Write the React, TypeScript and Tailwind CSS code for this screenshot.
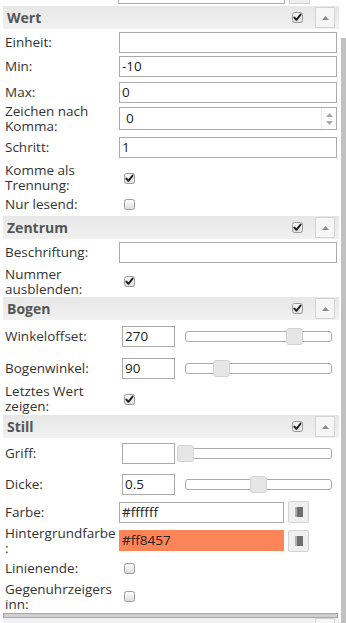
import React from "react";

const font = { fontFamily: '"Open Sans", "DejaVu Sans", sans-serif' };

function Check({ checked }: { checked?: boolean }) {
  return (
    <svg width="11" height="11" viewBox="0 0 11 11" className="block">
      <defs>
        <linearGradient id="cbg" x1="0" y1="0" x2="0" y2="1">
          <stop offset="0" stopColor="#ffffff" />
          <stop offset="1" stopColor="#dcdcdc" />
        </linearGradient>
      </defs>
      <rect x="0.5" y="0.5" width="10" height="10" rx="2" fill="url(#cbg)" stroke="#9a9a9a" />
      {checked && (
        <path d="M2.4 5.6 L4.4 7.8 L8.6 2.6" fill="none" stroke="#1f1f1f" strokeWidth="2" strokeLinecap="round" strokeLinejoin="round" />
      )}
    </svg>
  );
}

function Header({ title }: { title: string }) {
  return (
    <div className="flex shrink-0 items-center h-[23px] w-[336px] bg-gradient-to-b from-[#e7e7e7] to-[#f1f1f1] pl-[4px] pr-[4px]">
      <span className="flex-1 text-[14px] font-bold text-[#555]">{title}</span>
      <Check checked />
      <div className="ml-[12px] w-[20px] h-[21px] border border-[#d3d3d3] bg-[#f6f6f6] flex items-center justify-center">
        <svg width="7" height="4" viewBox="0 0 7 4">
          <path d="M0 4 L3.5 0 L7 4 Z" fill="#8a8a8a" />
        </svg>
      </div>
    </div>
  );
}

function Row({ label, h, children }: { label: React.ReactNode; h: string; children?: React.ReactNode }) {
  return (
    <div className={`flex shrink-0 items-center ${h}`}>
      <div className="w-[116px] pl-[2px] text-[13.5px] leading-[15px] text-[#333] shrink-0">{label}</div>
      {children}
    </div>
  );
}

function TextInput({ value, w = "w-[218px]", extra = "" }: { value?: string; w?: string; extra?: string }) {
  return (
    <div className={`${w} h-[21px] border border-[#aaa] bg-white text-[13.5px] leading-[19px] pl-[2px] text-[#222] ${extra}`}>
      {value}
    </div>
  );
}

function Slider({ frac }: { frac: number }) {
  return (
    <div className="relative ml-[10px] w-[147px] h-[11px] border border-[#aaa] rounded-[3px] bg-white">
      <div
        className="absolute top-[-4px] w-[17px] h-[17px] border border-[#d3d3d3] rounded-[3px] bg-[#e6e6e6]"
        style={{ left: `calc(${frac * 100}% - 9px)` }}
      />
    </div>
  );
}

function SliderRow({ label, value, frac, h }: { label: string; value: string; frac: number; h: string }) {
  return (
    <Row label={label} h={h}>
      <div className="ml-[3px] w-[53px] h-[21px] border border-[#aaa] bg-white text-[13.5px] leading-[19px] pl-[2px] text-[#222]">
        {value}
      </div>
      <Slider frac={frac} />
    </Row>
  );
}

function ColorButton() {
  return (
    <div className="ml-[4px] w-[21px] h-[22px] border border-[#d3d3d3] rounded-[2px] bg-[#f0f0f0] flex items-center justify-center">
      <svg width="8" height="10" viewBox="0 0 8 10">
        <rect x="2" y="0" width="6" height="10" fill="#6f6f6f" />
        <path d="M0 1 H2 M0 3 H2 M0 5 H2 M0 7 H2 M0 9 H2" stroke="#6f6f6f" strokeWidth="1" />
      </svg>
    </div>
  );
}

export default function App() {
  return (
    <div className="w-[346px] h-[623px] overflow-hidden bg-white flex" style={font}>
      <div className="w-[341px] pl-[3px] flex flex-col">
        {/* remains of the row above */}
        <div className="flex shrink-0 h-[6px] items-end">
          <div className="ml-[115px] w-[167px] h-[10px] border border-[#aaa] mb-[2px]" />
          <div className="ml-[4px] w-[21px] h-[10px] border border-[#d3d3d3] bg-[#f0f0f0] mb-[2px]" />
        </div>

        <div className="h-[24px] flex shrink-0">
          <Header title="Wert" />
        </div>
        <Row label="Einheit:" h="h-[24px]">
          <TextInput />
        </Row>
        <Row label="Min:" h="h-[25px]">
          <TextInput value="-10" />
        </Row>
        <Row label="Max:" h="h-[26px]">
          <TextInput value="0" />
        </Row>
        <Row label={<>Zeichen nach<br />Komma:</>} h="h-[27px]">
          <div className="relative w-[218px] h-[23px] border border-[#aaa] bg-white text-[13.5px] leading-[21px] pl-[6px] text-[#222]">
            0
            <div className="absolute right-0 top-0 bottom-0 w-[15px] flex flex-col items-center justify-center gap-[4px] border-l border-[#eee]">
              <svg width="7" height="4" viewBox="0 0 7 4"><path d="M0 4 L3.5 0 L7 4 Z" fill="#a8a8a8" /></svg>
              <svg width="7" height="4" viewBox="0 0 7 4"><path d="M0 0 L3.5 4 L7 0 Z" fill="#a8a8a8" /></svg>
            </div>
          </div>
        </Row>
        <Row label="Schritt:" h="h-[31px]">
          <TextInput value="1" />
        </Row>
        <Row label={<>Komme als<br />Trennung:</>} h="h-[30px]">
          <div className="ml-[5px]"><Check checked /></div>
        </Row>
        <Row label="Nur lesend:" h="h-[23px]">
          <div className="ml-[5px]"><Check /></div>
        </Row>

        <Header title="Zentrum" />
        <Row label="Beschriftung:" h="h-[27px]">
          <TextInput />
        </Row>
        <Row label={<>Nummer<br />ausblenden:</>} h="h-[31px]">
          <div className="ml-[5px]"><Check checked /></div>
        </Row>

        <Header title="Bogen" />
        <SliderRow label="Winkeloffset:" value="270" frac={0.75} h="h-[33px]" />
        <SliderRow label="Bogenwinkel:" value="90" frac={0.25} h="h-[30px]" />
        <Row label={<>Letztes Wert<br />zeigen:</>} h="h-[32px]">
          <div className="ml-[5px]"><Check checked /></div>
        </Row>

        <Header title="Still" />
        <SliderRow label="Griff:" value="" frac={0} h="h-[31px]" />
        <SliderRow label="Dicke:" value="0.5" frac={0.5} h="h-[30px]" />
        <Row label="Farbe:" h="h-[26px]">
          <TextInput value="#ffffff" w="w-[165px]" />
          <ColorButton />
        </Row>
        <Row label={<>Hintergrundfarbe<br />:</>} h="h-[31px]">
          <TextInput value="#ff8457" w="w-[165px]" extra="!bg-[#ff8457] !border-[#ff8457]" />
          <ColorButton />
        </Row>
        <Row label="Linienende:" h="h-[25px]">
          <div className="ml-[5px]"><Check /></div>
        </Row>
        <Row label={<>Gegenuhrzeigers<br />inn:</>} h="h-[31px]">
          <div className="ml-[5px]"><Check /></div>
        </Row>

        <div className="mt-[1px] shrink-0 w-[335px] h-[5px] bg-[#d0d0d0] border border-[#a9a9a9]" />
        <div className="w-[336px] shrink-0 h-[10px] bg-[#f1f1f1] flex justify-end pr-[4px]">
          <div className="w-[20px] h-[10px] border border-[#d3d3d3] bg-[#f6f6f6]" />
        </div>
      </div>
      <div className="w-[5px] flex flex-col">
        <div className="h-[38px]" />
        <div className="flex-1 bg-[#c1c1c1]" />
      </div>
    </div>
  );
}
